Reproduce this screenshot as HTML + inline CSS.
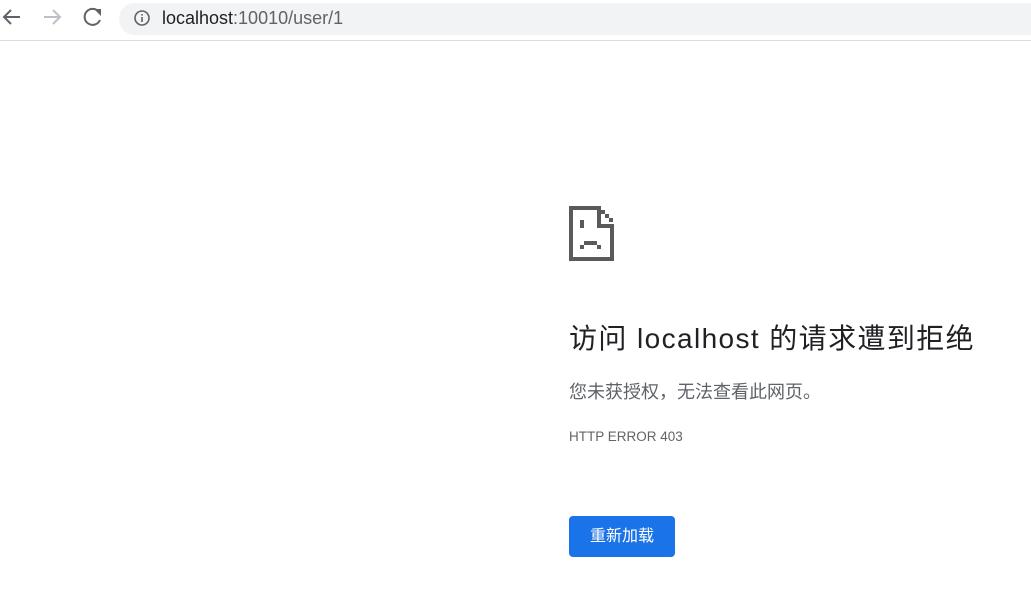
<!DOCTYPE html>
<html><head><meta charset="utf-8"><style>
body{margin:0;width:1031px;height:601px;background:#fff;position:relative;overflow:hidden;font-family:"Liberation Sans","Noto Sans CJK SC",sans-serif}
.bar{position:absolute;left:0;top:0;width:1031px;height:40px;border-bottom:1px solid #dadce0;background:#fff}
.omni{position:absolute;left:119px;top:3px;width:940px;height:32px;border-radius:16px;background:#f1f3f4}
.url{position:absolute;left:162px;top:8px;font-size:18px;color:#202124}
.url span{color:#5f6368}
.t{position:absolute;left:569px;white-space:nowrap}
</style></head><body>
<div class="bar">
<svg style="position:absolute;left:0;top:0" width="120" height="40">
<path d="M20 17H5M11 10L4 17L11 24" stroke="#5f6368" stroke-width="2" fill="none"/>
<path d="M44 17H59M53 10L60 17L53 24" stroke="#bdc1c6" stroke-width="2" fill="none"/>
<path d="M99 12A8 8 0 1 0 100 20" stroke="#5f6368" stroke-width="2" fill="none"/>
<path d="M94 9H101V16Z" fill="#5f6368"/>
</svg>
<div class="omni"></div>
<svg style="position:absolute;left:133px;top:9px" width="18" height="18"><circle cx="9" cy="9" r="7" stroke="#5f6368" stroke-width="1.6" fill="none"/><rect x="8.2" y="8" width="1.6" height="5" fill="#5f6368"/><rect x="8.2" y="5" width="1.6" height="1.6" fill="#5f6368"/></svg>
<div class="url">localhost<span>:10010/user/1</span></div>
</div>
<svg style="position:absolute;left:0;top:0" width="1031" height="601">
<g fill="#5a5a5a">
<rect x="569" y="206" width="32" height="4"/>
<rect x="569" y="206" width="4" height="55"/>
<rect x="569" y="257" width="45" height="4"/>
<rect x="610" y="224" width="4" height="37"/>
<rect x="597" y="206" width="4" height="22"/>
<rect x="597" y="224" width="17" height="4"/>
<rect x="601" y="210" width="4" height="4"/>
<rect x="605" y="214" width="4" height="4"/>
<rect x="609" y="218" width="4" height="4"/>
<rect x="580" y="220" width="4" height="8"/>
<rect x="584" y="241" width="13" height="4"/>
<rect x="580" y="245" width="4" height="4"/>
<rect x="597" y="245" width="4" height="4"/>
</g></svg>
<div class="t" style="top:322px;font-size:28px;letter-spacing:1.4px;color:#202124;line-height:34px">访问 localhost 的请求遭到拒绝</div>
<div class="t" style="top:380px;font-size:18px;color:#5f6368;line-height:24px">您未获授权，无法查看此网页。</div>
<div class="t" style="top:429px;font-size:13.5px;color:#646464">HTTP ERROR 403</div>
<div style="position:absolute;left:569px;top:516px;width:106px;height:41px;background:#1a73e8;border-radius:4px;color:#fff;font-size:16px;line-height:42px;text-align:center">重新加载</div>
</body></html>
